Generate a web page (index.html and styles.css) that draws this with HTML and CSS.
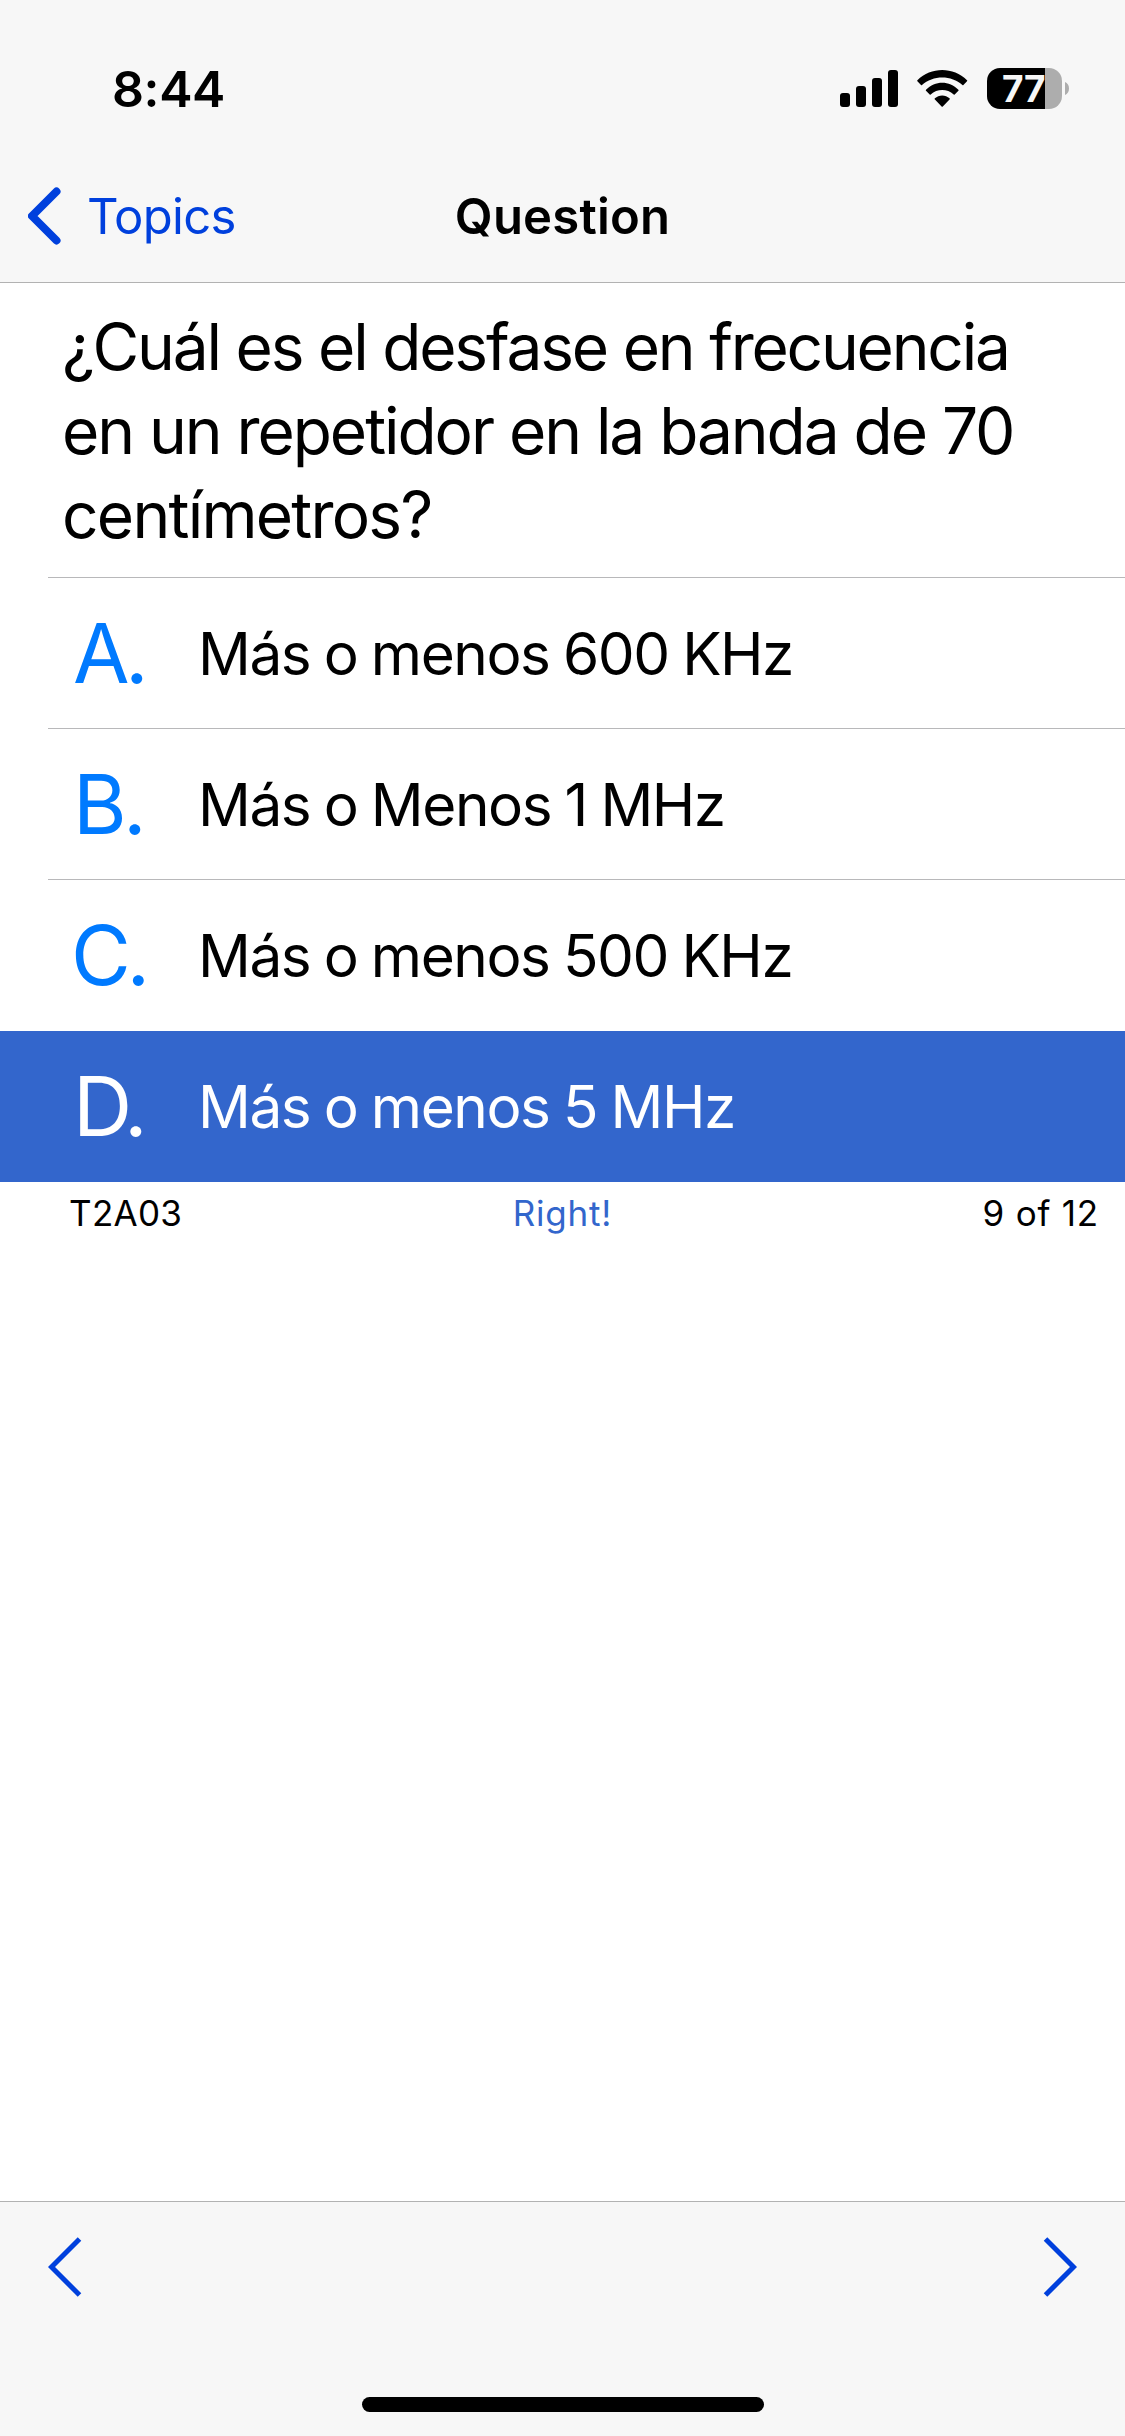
FILE: index.html
```
<!DOCTYPE html>
<html lang="es">
<head>
	<meta charset="UTF-8">
	<meta name="viewport" content="width=device-width, initial-scale=1.0">
	<title>Question</title>
	<link rel="stylesheet" href="styles.css">
</head>
<body>

	<!-- HEADER -->
	<header class="header">
		<div class="status-bar">
			<span class="time">8:44</span>
			<div class="status-icons">
				<svg class="signal" width="58" height="37" viewBox="0 0 58 37">
					<rect x="0" y="23" width="10" height="14" rx="3"/>
					<rect x="16" y="16" width="10" height="21" rx="3"/>
					<rect x="32" y="8" width="10" height="29" rx="3"/>
					<rect x="48" y="0" width="10" height="37" rx="3"/>
				</svg>
				<svg class="wifi" width="51" height="37" viewBox="0 0 51 37">
					<path d="M.4 10.200C14-3.400 36.400-3.400 50 10.200q.5.5 0 1L46.400 15.100q-.5.5-1 0C34.500 5 15.900 5 5 15.100q-.5.5-1 0L.4 11.200q-.5-.5 0-1Z"/>
					<path d="M9 19.800C18 10.400 32.400 10.400 41.400 19.800q.5.5 0 1L37.700 24.500q-.5.5-1 0C30.200 18.600 20.200 18.600 13.700 24.500q-.5.500-1 0L9 20.800q-.5-.5 0-1Z"/>
					<path d="M17.900 28.300C21.800 24.400 28.600 24.400 32.500 28.300q.6.6 0 1.200L25.800 36.500q-.6.6-1.200 0L17.900 29.500q-.6-.6 0-1.200Z"/>
				</svg>
				<div class="battery">
					<div class="battery-body"><span>77</span></div>
					<svg width="4" height="13" viewBox="0 0 4 13"><path d="M0 0C2.500 1 4 3.500 4 6.500S2.500 12 0 13Z"/></svg>
				</div>
			</div>
		</div>
		<nav class="navbar">
			<a class="back" href="#">
				<svg width="34" height="58" viewBox="0 0 34 58"><path d="M28.500 4.500 4 29 28.500 53.500"/></svg>
				Topics
			</a>
			<h1>Question</h1>
		</nav>
	</header>

	<!-- QUESTION -->
	<main class="content">
		<div class="question">
			<p>
				<span class="first">¿Cuál es el desfase en frecuencia</span>
				<span>en un repetidor en la banda de 70</span>
				<span class="last">centímetros?</span>
			</p>
		</div>
		<ul class="answers">
			<li><div class="row"><span class="letter">A.</span><span class="text">Más o menos 600 KHz</span></div></li>
			<li><div class="row"><span class="letter letter-b">B.</span><span class="text">Más o Menos 1 MHz</span></div></li>
			<li class="before-selected"><div class="row"><span class="letter letter-c">C.</span><span class="text">Más o menos 500 KHz</span></div></li>
			<li class="selected"><div class="row"><span class="letter">D.</span><span class="text">Más o menos 5 MHz</span></div></li>
		</ul>
		<div class="info">
			<span class="code">T2A03</span>
			<span class="result">Right!</span>
			<span class="count">9 of 12</span>
		</div>
	</main>

	<!-- TOOLBAR -->
	<footer class="toolbar">
		<div class="arrows">
			<a href="#"><svg width="35" height="62" viewBox="0 0 35 62"><path d="M31.500 3 3.500 31 31.500 59"/></svg></a>
			<a href="#"><svg width="35" height="62" viewBox="0 0 35 62"><path d="M3.500 3 31.500 31 3.500 59"/></svg></a>
		</div>
		<div class="home-indicator"></div>
	</footer>

</body>
</html>
```
FILE: styles.css
```
* {
	margin: 0;
	padding: 0;
	box-sizing: border-box;
}

body {
	height: 100vh;
	display: flex;
	flex-direction: column;
	background: #fff;
	color: #000;
	font-family: "Inter", "Liberation Sans", sans-serif;
}

svg {
	display: block;
	flex-shrink: 0;
}

a {
	color: #0040dd;
	text-decoration: none;
}

/* HEADER */
.header {
	height: 283px;
	background: #f7f7f7;
	border-bottom: 1px solid #b2b2b2;
}

.status-bar {
	height: 150px;
	padding: 27px 56px 0 112px;
	display: flex;
	justify-content: space-between;
	align-items: center;
}

.time {
	font-size: 50px;
	font-weight: 600;
	letter-spacing: -0.4px;
}

.status-icons {
	display: flex;
	align-items: center;
}

.wifi {
	margin: 0 19px;
}

.battery {
	display: flex;
	align-items: center;
	gap: 3px;
}

.battery svg {
	fill: #adadad;
}

.battery-body {
	width: 75px;
	height: 41px;
	padding-left: 15px;
	border-radius: 13px;
	background: linear-gradient(to right, #000 58px, #adadad 58px);
	color: #f7f7f7;
	font-size: 37px;
	font-weight: 700;
	line-height: 41px;
	letter-spacing: -0.3px;
}

.navbar {
	height: 132px;
	display: grid;
	grid-template-columns: 1fr auto 1fr;
	align-items: center;
	font-size: 49px;
}

.back {
	display: flex;
	align-items: center;
	gap: 25px;
	padding-left: 28px;
	letter-spacing: -0.7px;
}

.back path {
	fill: none;
	stroke: #0040dd;
	stroke-width: 8;
	stroke-linecap: round;
	stroke-linejoin: round;
}

.navbar h1 {
	font-size: 49px;
	font-weight: 600;
	letter-spacing: 0.2px;
}

/* QUESTION */
.content {
	flex: 1;
}

.question {
	height: 295px;
	margin-left: 48px;
	padding: 22px 0 0 14px;
	border-bottom: 1px solid #b8b8ba;
	font-size: 64px;
	line-height: 84px;
	letter-spacing: -2.05px;
}

.question span {
	display: block;
	white-space: nowrap;
}

.question .first {
	letter-spacing: -2.2px;
}

.question .last {
	letter-spacing: -1.75px;
}

.answers {
	list-style: none;
}

.answers li {
	height: 151px;
	padding-left: 48px;
}

.row {
	height: 100%;
	display: flex;
	align-items: center;
	padding-left: 25px;
	border-bottom: 1px solid #b8b8ba;
}

.letter {
	width: 125px;
	color: #007aff;
	font-size: 82px;
	letter-spacing: -4.5px;
}

.letter-b {
	letter-spacing: -3.6px;
}

/* round left side of the C hangs out a little */
.letter-c {
	width: 127px;
	margin-left: -2px;
}

.text {
	font-size: 58.5px;
	letter-spacing: -1.45px;
	word-spacing: -1.5px;
}

.before-selected .row,
.selected .row {
	border-color: transparent;
}

.selected {
	background: #3366cc;
}

.selected .letter,
.selected .text {
	color: #fff;
}

.info {
	height: 62px;
	padding: 0 26px 0 69px;
	display: grid;
	grid-template-columns: 1fr auto 1fr;
	align-items: center;
	font-size: 35px;
	letter-spacing: 0.8px;
}

.info .code {
	letter-spacing: 0.3px;
}

.info .result {
	color: #3366cc;
	margin-left: -43px;
}

.info .count {
	text-align: right;
}

/* TOOLBAR */
.toolbar {
	height: 235px;
	display: flex;
	flex-direction: column;
	justify-content: space-between;
	background: #f7f7f7;
	border-top: 1px solid #b2b2b2;
}

.arrows {
	display: flex;
	justify-content: space-between;
	padding: 34px 48px 0 48px;
}

.arrows path {
	fill: none;
	stroke: #0040dd;
	stroke-width: 5;
	stroke-linecap: butt;
}

.home-indicator {
	width: 402px;
	height: 15px;
	margin: 0 auto 24px;
	border-radius: 8px;
	background: #000;
}
```
